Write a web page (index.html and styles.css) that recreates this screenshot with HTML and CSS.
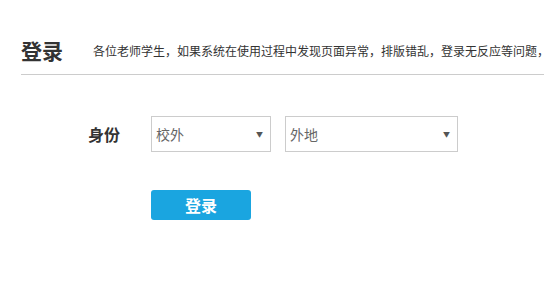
FILE: index.html
```html
<!DOCTYPE html>
<html lang="zh-CN">
<head>
<meta charset="utf-8">
<title>登录</title>
<link rel="stylesheet" href="styles.css">
</head>
<body>
<div class="page">
  <div class="header">
    <h1 class="title">登录</h1>
    <p class="notice">各位老师学生，如果系统在使用过程中发现页面异常，排版错乱，登录无反应等问题，</p>
  </div>
  <div class="form">
    <div class="row">
      <label class="label">身份</label>
      <div class="select s1"><span class="val">校外</span><span class="arrow">▼</span></div>
      <div class="select s2"><span class="val">外地</span><span class="arrow">▼</span></div>
    </div>
    <div class="actions">
      <button class="btn" type="button">登录</button>
    </div>
  </div>
</div>
</body>
</html>
```
FILE: styles.css
```css
html, body {
  margin: 0;
  padding: 0;
  background: #fff;
  overflow: hidden;
}
body {
  font-family: "Noto Sans CJK SC", "Microsoft YaHei", sans-serif;
  color: #333;
}
.page {
  width: 544px;
  height: 283px;
}
.header {
  margin-left: 21px;
  display: flex;
  align-items: center;
  height: 75px;
  border-bottom: 1px solid #ccc;
  box-sizing: border-box;
  padding-top: 25px;
  white-space: nowrap;
  overflow: hidden;
}
.title {
  margin: 0;
  font-size: 21px;
  font-weight: bold;
  color: #333;
  line-height: 30px;
}
.notice {
  margin: 0 0 0 30px;
  font-size: 12px;
  color: #333;
  line-height: 20px;
  padding-top: 3px;
}
.form {
  padding-top: 41px;
}
.row {
  display: flex;
  align-items: center;
  margin-left: 88px;
}
.label {
  width: 63px;
  font-size: 16px;
  font-weight: bold;
  color: #333;
}
.select {
  height: 36px;
  box-sizing: border-box;
  border: 1px solid #ccc;
  display: flex;
  align-items: center;
  justify-content: space-between;
  padding: 0 7px 0 4px;
}
.s1 { width: 120px; margin-right: 14px; }
.s2 { width: 173px; }
.val {
  font-size: 14px;
  color: #666;
}
.arrow {
  font-size: 7px;
  color: #555;
}
.actions {
  margin-left: 151px;
  margin-top: 38px;
}
.btn {
  width: 100px;
  height: 30px;
  border: none;
  border-radius: 3px;
  background: #1aa5e0;
  color: #fff;
  font-family: "Noto Sans CJK SC", "Microsoft YaHei", sans-serif;
  font-size: 16px;
  font-weight: bold;
  padding: 0;
  line-height: 30px;
}
```
